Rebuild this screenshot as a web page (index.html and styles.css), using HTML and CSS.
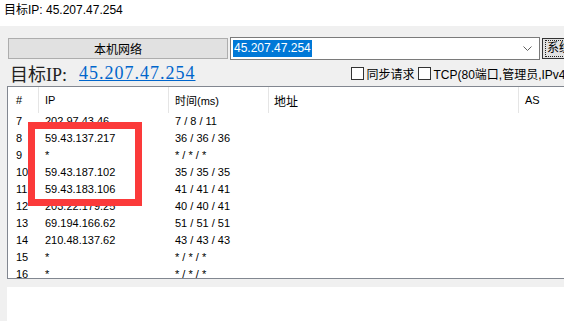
FILE: index.html
```html
<!DOCTYPE html>
<html>
<head>
<meta charset="utf-8">
<link rel="stylesheet" href="styles.css">
</head>
<body>
<div class="window">
  <div class="title">目标IP: 45.207.47.254</div>
  <div class="toolbar">
    <div class="btn btn-local">本机网络</div>
    <div class="combo">
      <span class="sel">45.207.47.254</span>
      <svg class="chev" width="9" height="6" viewBox="0 0 9 6"><path d="M0.5 0.5 L4.5 4.5 L8.5 0.5" fill="none" stroke="#606060" stroke-width="1"/></svg>
    </div>
    <div class="btn btn-sys"><span class="focus">系统</span></div>
  </div>
  <div class="labelrow">
    <span class="biglabel">目标IP:</span>
    <span class="link">45.207.47.254</span>
    <div class="checks">
      <span class="box"></span><span class="cklabel">同步请求</span>
      <span class="box"></span><span class="cklabel">TCP(80端口,管理员,IPv4)</span>
    </div>
  </div>
  <div class="list">
    <div class="head">
      <div class="hc c1">#</div>
      <div class="hc c2">IP</div>
      <div class="hc c3">时间(ms)</div>
      <div class="hc c4">地址</div>
      <div class="hc c5">AS</div>
    </div>
    <div class="rows">
      <div class="row"><span class="c1">7</span><span class="c2">202.97.43.46</span><span class="c3">7 / 8 / 11</span></div>
      <div class="row"><span class="c1">8</span><span class="c2">59.43.137.217</span><span class="c3">36 / 36 / 36</span></div>
      <div class="row"><span class="c1">9</span><span class="c2">*</span><span class="c3">* / * / *</span></div>
      <div class="row"><span class="c1">10</span><span class="c2">59.43.187.102</span><span class="c3">35 / 35 / 35</span></div>
      <div class="row"><span class="c1">11</span><span class="c2">59.43.183.106</span><span class="c3">41 / 41 / 41</span></div>
      <div class="row"><span class="c1">12</span><span class="c2">203.22.179.25</span><span class="c3">40 / 40 / 41</span></div>
      <div class="row"><span class="c1">13</span><span class="c2">69.194.166.62</span><span class="c3">51 / 51 / 51</span></div>
      <div class="row"><span class="c1">14</span><span class="c2">210.48.137.62</span><span class="c3">43 / 43 / 43</span></div>
      <div class="row"><span class="c1">15</span><span class="c2">*</span><span class="c3">* / * / *</span></div>
      <div class="row"><span class="c1">16</span><span class="c2">*</span><span class="c3">* / * / *</span></div>
    </div>
  </div>
  <div class="bottom"></div>
  <div class="highlight"></div>
</div>
</body>
</html>
```
FILE: styles.css
```css
* { box-sizing: border-box; }
html, body { margin: 0; padding: 0; }
body {
  width: 564px;
  height: 321px;
  overflow: hidden;
  background: #f0f0f0;
  font-family: "Liberation Sans", "Noto Sans CJK SC", sans-serif;
  font-size: 12px;
  color: #000;
}
.window { position: relative; width: 564px; height: 321px; overflow: hidden; }
.title {
  height: 26px;
  background: #fff;
  padding-left: 4px;
  line-height: 21px;
  font-size: 12px;
}
.toolbar {
  display: flex;
  align-items: center;
  gap: 2px;
  padding-left: 8px;
  margin-top: 11px;
  height: 23px;
  white-space: nowrap;
}
.btn {
  height: 21px;
  background: #e1e1e1;
  border: 1px solid #adadad;
  display: flex;
  align-items: center;
  justify-content: center;
  flex-shrink: 0;
}
.btn-local { width: 220px; }
.combo {
  width: 310px;
  height: 23px;
  background: #fff;
  border: 1px solid #7a7a7a;
  display: flex;
  align-items: center;
  padding-left: 2px;
  padding-right: 7px;
  flex-shrink: 0;
}
.sel {
  background: #0078d7;
  color: #fff;
  height: 17px;
  line-height: 17px;
  padding: 0 1px;
  font-size: 12px;
}
.chev { margin-left: auto; }
.btn-sys {
  width: 60px;
  border-color: #333;
  justify-content: flex-start;
  padding-left: 3px;
}
.focus {
  outline: 1px dotted #222;
  line-height: 15px;
  padding: 0 1px;
}
.labelrow {
  height: 26px;
  display: flex;
  align-items: center;
  padding-left: 10px;
  white-space: nowrap;
}
.biglabel {
  font-family: "Liberation Serif", "Noto Sans CJK SC", serif;
  font-size: 18px;
  color: #222;
  width: 69px;
  flex-shrink: 0;
}
.link {
  font-family: "Liberation Serif", serif;
  font-size: 18px;
  letter-spacing: 1px;
  color: #0066cc;
  text-decoration: underline;
  flex-shrink: 0;
}
.checks {
  display: flex;
  align-items: center;
  margin-left: 155px;
  flex-shrink: 0;
}
.box {
  width: 13px;
  height: 13px;
  border: 1px solid #333;
  background: #fff;
  flex-shrink: 0;
}
.cklabel { margin-left: 3px; margin-right: 3px; }
.list {
  margin-left: 7px;
  width: 600px;
  height: 193px;
  background: #fff;
  border: 1px solid #828790;
  border-right: none;
  display: flex;
  flex-direction: column;
  font-size: 11px;
}
.head {
  display: grid;
  grid-template-columns: 31px 130px 100px 250px 1fr;
  height: 26px;
  flex-shrink: 0;
}
.hc {
  border-right: 1px solid #e5e5e5;
  display: flex;
  align-items: center;
  padding-left: 6px;
  font-size: 11px;
}
.head .c1 { padding-left: 8px; }
.head .c4 { padding-left: 5px; font-size: 12px; }
.rows { flex: 1; overflow: hidden; }
.row {
  display: grid;
  grid-template-columns: 31px 130px 100px;
  height: 17px;
  line-height: 17px;
}
.row span { padding-left: 6px; }
.row .c1 { padding-left: 8px; }
.bottom {
  margin-top: 8px;
  margin-left: 7px;
  height: 40px;
  background: #fff;
}
.highlight {
  position: absolute;
  left: 28px;
  top: 122px;
  width: 114px;
  height: 84px;
  border: 7px solid #fb3a3a;
}
```
